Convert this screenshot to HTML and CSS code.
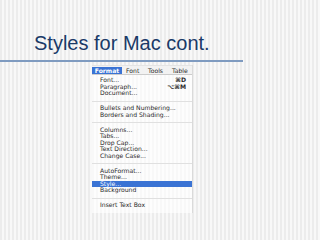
FILE: index.html
```html
<!DOCTYPE html>
<html lang="en">
<head>
    <meta charset="UTF-8">
    <meta name="viewport" content="width=device-width, initial-scale=1.0">
    <link rel="stylesheet" href="styles.css">
    <title>Styles for Mac cont.</title>
</head>
<body>
    <div class="slide">
        <h1 class="title">Styles for Mac cont.</h1>
        <div class="rule"></div>

        <div class="menu">
            <div class="menubar">
                <span class="bar-item active">Format</span>
                <span class="bar-item font">Font</span>
                <span class="bar-item tools">Tools</span>
                <span class="bar-item">Table</span>
            </div>
            <ul class="items">
                <li><span>Font...</span><span class="key">&#8984;D</span></li>
                <li><span>Paragraph...</span><span class="key">&#8997;&#8984;M</span></li>
                <li><span>Document...</span></li>
                <li class="sep"></li>
                <li><span>Bullets and Numbering...</span></li>
                <li><span>Borders and Shading...</span></li>
                <li class="sep"></li>
                <li><span>Columns...</span></li>
                <li><span>Tabs...</span></li>
                <li><span>Drop Cap...</span></li>
                <li><span>Text Direction...</span></li>
                <li><span>Change Case...</span></li>
                <li class="sep"></li>
                <li><span>AutoFormat...</span></li>
                <li><span>Theme...</span></li>
                <li class="selected"><span>Style...</span></li>
                <li><span>Background</span></li>
                <li class="sep"></li>
                <li><span>Insert Text Box</span></li>
            </ul>
        </div>
    </div>
</body>
</html>
```

FILE: styles.css
```css
body {
    margin: 0;
    padding: 0;
    width: 320px;
    height: 240px;
    overflow: hidden;
    font-family: 'Liberation Sans', Arial, sans-serif;
    background-color: #f3f3f3;
    background-image: repeating-linear-gradient(90deg, #ececec 0, #ececec 2px, #f8f8f8 2px, #f8f8f8 4px);
}

.slide {
    height: 240px;
}

.title {
    margin: 0;
    padding: 31px 0 0 34px;
    font-size: 20px;
    line-height: 24px;
    font-weight: normal;
    color: #1a3a68; /* azul escuro */
}

.rule {
    margin-top: 5px;
    width: 243px;
    height: 2px;
    background-color: #7f9bc0;
}

.menu {
    margin: 3px 0 0 92px;
    width: 100px;
    background-color: rgba(255, 255, 255, 0.65);
    border-right: 1px solid #dadada;
    font-family: 'DejaVu Sans', sans-serif;
    font-size: 6.1px;
    color: #2a2a2a;
}

.menubar {
    display: flex;
    align-items: center;
    height: 10px;
    border-top: 1px solid #e4e4e4;
    border-bottom: 1px solid #cccccc;
    background-color: #f2f2f2;
    box-sizing: border-box;
}

.bar-item {
    line-height: 7px;
}

.active {
    width: 30px;
    text-align: center;
    background-color: #3a73d4;
    color: #fff;
    font-weight: bold;
}

.font {
    padding-left: 4px;
    width: 22px;
}

.tools {
    width: 24px;
}

.items {
    list-style: none;
    margin: 0;
    padding: 2px 0 4px 0;
}

.items li {
    display: flex;
    justify-content: space-between;
    height: 6.5px;
    line-height: 6.5px;
    padding: 0 6px 0 8px;
}

.items li.sep {
    height: 8.5px;
    position: relative;
}

.items li.sep::after {
    content: "";
    position: absolute;
    left: 0;
    right: 0;
    top: 4px;
    height: 1px;
    background-color: #e0e0e0;
}

.items li.selected {
    background-color: #3a73d4;
    color: #fff;
}

.key {
    font-weight: bold;
}
```
